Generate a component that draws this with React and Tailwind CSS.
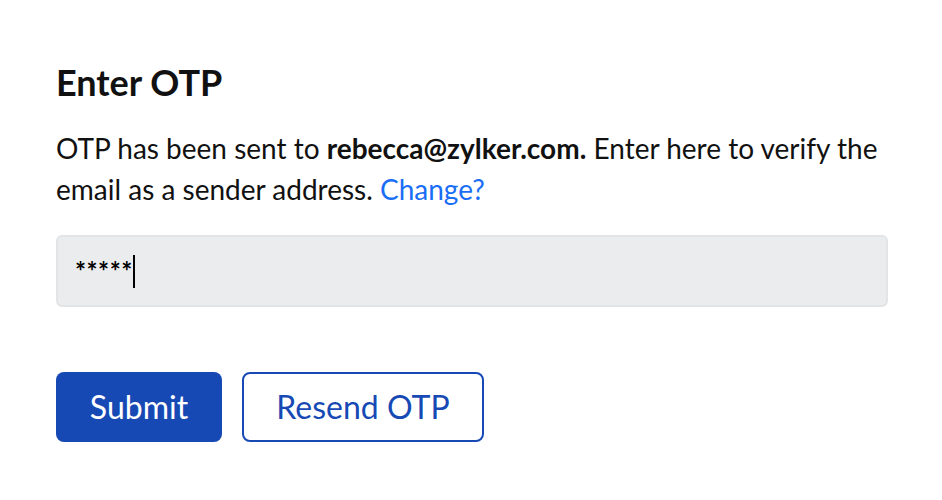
export default function App() {
  return (
    <div
      className="min-h-[500px] w-[942px] bg-white px-[56px] pt-[60px] text-[#111]"
      style={{ fontFamily: "Lato, 'Noto Sans', sans-serif" }}
    >
      <h1 className="text-[36px] font-bold leading-[44px]">Enter OTP</h1>
      <p className="mt-[24px] text-[28px] leading-[41px]">
        OTP has been sent to <span className="font-bold">rebecca@zylker.com.</span> Enter here to verify the
        email as a sender address. <a className="text-[#1a6ef5] cursor-pointer">Change?</a>
      </p>
      <div className="mt-[25px] flex h-[72px] w-[832px] items-center rounded-[6px] border-2 border-[#e3e4e6] bg-[#ebecee] px-[17px]">
        <span className="text-[26px] font-bold leading-none tracking-[0.5px] text-black">*****</span>
        <span className="h-[33px] w-[2px] bg-black" />
      </div>
      <div className="mt-[65px] flex gap-[20px]">
        <button className="h-[70px] w-[166px] rounded-[8px] bg-[#1749b5] text-[32px] text-white">
          Submit
        </button>
        <button className="h-[70px] w-[242px] rounded-[8px] border-2 border-[#1749b5] bg-white text-[32px] text-[#1749b5]">
          Resend OTP
        </button>
      </div>
    </div>
  );
}
